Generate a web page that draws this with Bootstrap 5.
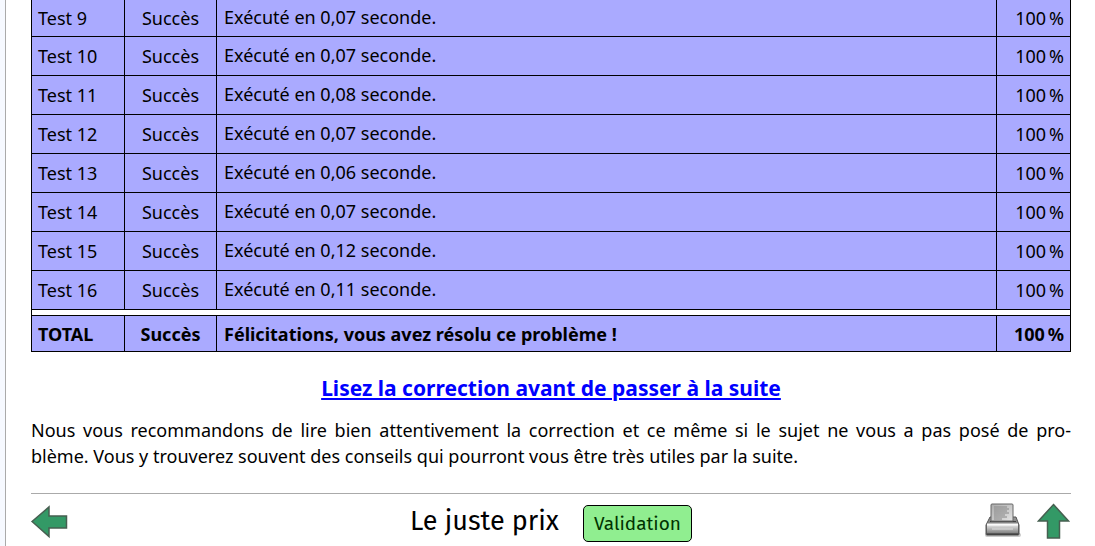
<!DOCTYPE html>
<html lang="fr">
<head>
<meta charset="utf-8">
<meta name="viewport" content="width=device-width, initial-scale=1">
<title>Le juste prix – Validation</title>
<link href="https://cdn.jsdelivr.net/npm/bootstrap@5.3.0/dist/css/bootstrap.min.css" rel="stylesheet">
<style>
body { font-family: "Noto Sans", sans-serif; font-size: 18px; line-height: 26px; color: #000; background: #f6f9ff; overflow: hidden; }
.page { margin-left: 5px; padding: 0 24px 0 25px; border-left: 1px solid #aaa; background: #fff; min-height: 100vh; }
.results { width: 100%; border-collapse: collapse; border: 1px solid #000; border-top: 0; }
.results td, .results th { height: 39px; padding: 0 6px; border: 1px solid #000; background: #aaf; font-weight: 400; vertical-align: middle; }
.results td.detail { padding: 0 7px 2px; }
.results tbody tr:first-child > * { height: 36px; border-top: 0; }
.results tr.gap td { height: 6px; padding: 0; background: #fff; }
.results tfoot tr > *, .results tfoot td.detail { height: 36px; padding-top: 2px; padding-bottom: 0; font-weight: 700; }
.c-name { width: 93px; }
.c-state { width: 92px; }
.c-score { width: 74px; }
.correction { margin: 23px 0 15px; font-size: 21px; line-height: 27px; }
.correction a { color: #00f; }
.advice { margin: 0 0 24px; }
.full-line { display: block; text-align: justify; text-align-last: justify; }
.footbar { border-top: 1px solid #aaa; padding-top: 9px; }
.side { flex: 1 1 0; }
.footbar h1, .btn-valid { font-family: "Fira Sans", "Noto Sans", sans-serif; }
.footbar h1 { font-size: 27px; line-height: 36px; }
.btn-valid { font-size: 19px; line-height: 27px; margin-top: 2px; padding: 4px 10px; color: #030; background: #90ee90; border: 1px solid #000; border-radius: 5px; }
</style>
</head>
<body>
<main class="page">
<table class="results">
<colgroup><col class="c-name"><col class="c-state"><col><col class="c-score"></colgroup>
<tbody>
<tr><th scope="row">Test 9</th><td class="text-center">Succès</td><td class="detail">Exécuté en 0,07 seconde.</td><td class="text-end">100&#8239;%</td></tr>
<tr><th scope="row">Test 10</th><td class="text-center">Succès</td><td class="detail">Exécuté en 0,07 seconde.</td><td class="text-end">100&#8239;%</td></tr>
<tr><th scope="row">Test 11</th><td class="text-center">Succès</td><td class="detail">Exécuté en 0,08 seconde.</td><td class="text-end">100&#8239;%</td></tr>
<tr><th scope="row">Test 12</th><td class="text-center">Succès</td><td class="detail">Exécuté en 0,07 seconde.</td><td class="text-end">100&#8239;%</td></tr>
<tr><th scope="row">Test 13</th><td class="text-center">Succès</td><td class="detail">Exécuté en 0,06 seconde.</td><td class="text-end">100&#8239;%</td></tr>
<tr><th scope="row">Test 14</th><td class="text-center">Succès</td><td class="detail">Exécuté en 0,07 seconde.</td><td class="text-end">100&#8239;%</td></tr>
<tr><th scope="row">Test 15</th><td class="text-center">Succès</td><td class="detail">Exécuté en 0,12 seconde.</td><td class="text-end">100&#8239;%</td></tr>
<tr><th scope="row">Test 16</th><td class="text-center">Succès</td><td class="detail">Exécuté en 0,11 seconde.</td><td class="text-end">100&#8239;%</td></tr>
<tr class="gap"><td colspan="4"></td></tr>
</tbody>
<tfoot>
<tr><th scope="row">TOTAL</th><td class="text-center">Succès</td><td class="detail">Félicitations, vous avez résolu ce problème&nbsp;!</td><td class="text-end">100&#8239;%</td></tr>
</tfoot>
</table>
<p class="correction text-center fw-bold"><a href="#correction">Lisez la correction avant de passer à la suite</a></p>
<p class="advice"><span class="full-line">Nous vous recommandons de lire bien attentivement la correction et ce même si le sujet ne vous a pas posé de pro-</span>blème. Vous y trouverez souvent des conseils qui pourront vous être très utiles par la suite.</p>
<footer class="footbar d-flex align-items-start">
<div class="side"><a class="d-inline-block" href="#precedent" aria-label="Précédent"><svg class="d-block" width="37" height="36" viewBox="0 0 37 36"><path d="M1 18.500 18 4v9h17.500v12H18v8.500z" fill="#396" stroke="#465f50" stroke-width="1.500"/></svg></a></div>
<div class="d-flex align-items-start gap-4">
<h1 class="m-0 fw-normal">Le juste prix</h1>
<button type="button" class="btn btn-valid">Validation</button>
</div>
<div class="side d-flex justify-content-end gap-3">
<a href="#imprimer" aria-label="Imprimer"><svg class="d-block" width="36" height="36" viewBox="0 0 36 36">
<defs><linearGradient id="body" x2="0" y2="1"><stop stop-color="#999"/><stop offset="1" stop-color="#555"/></linearGradient>
<linearGradient id="front" x2="0" y2="1"><stop stop-color="#e4e4e4"/><stop offset="1" stop-color="#777"/></linearGradient>
<linearGradient id="paper" x2="1" y2="1"><stop stop-color="#aaa"/><stop offset="1" stop-color="#e4e4e4"/></linearGradient></defs>
<rect x="0" y="30" width="36" height="4" rx="2" fill="#777" opacity=".4"/>
<path d="M5 14h26l3 8v9q0 1-1 1H2q-1 0-1-1v-9z" fill="url(#body)" stroke="#555"/>
<path d="M2 22h31v9H2z" fill="url(#front)"/>
<path d="M5 18.500h26" stroke="#444"/>
<path d="M7 1h20q1 0 1 1v16H6V2q0-1 1-1z" fill="url(#paper)" stroke="#666"/>
<path d="M9 4h13M9 6h15M9 8h13M9 10h15M9 12h11M9 14h13M9 16h8" stroke="#888"/>
<path d="M2 21.500h31" stroke="#fafafa" stroke-width="2"/><path d="M7 26h21" stroke="#ddd"/><path d="M2 31h31" stroke="#333"/></svg></a>
<a href="#haut" aria-label="Remonter"><svg class="d-block" width="34" height="37" viewBox="0 0 34 37"><path d="M16.500 1.500 31.500 18H22.500v17h-12V18H1.500z" fill="#396" stroke="#465f50" stroke-width="1.500"/></svg></a>
</div>
</footer>
</main>
<script src="https://cdn.jsdelivr.net/npm/bootstrap@5.3.0/dist/js/bootstrap.bundle.min.js"></script>
</body>
</html>
